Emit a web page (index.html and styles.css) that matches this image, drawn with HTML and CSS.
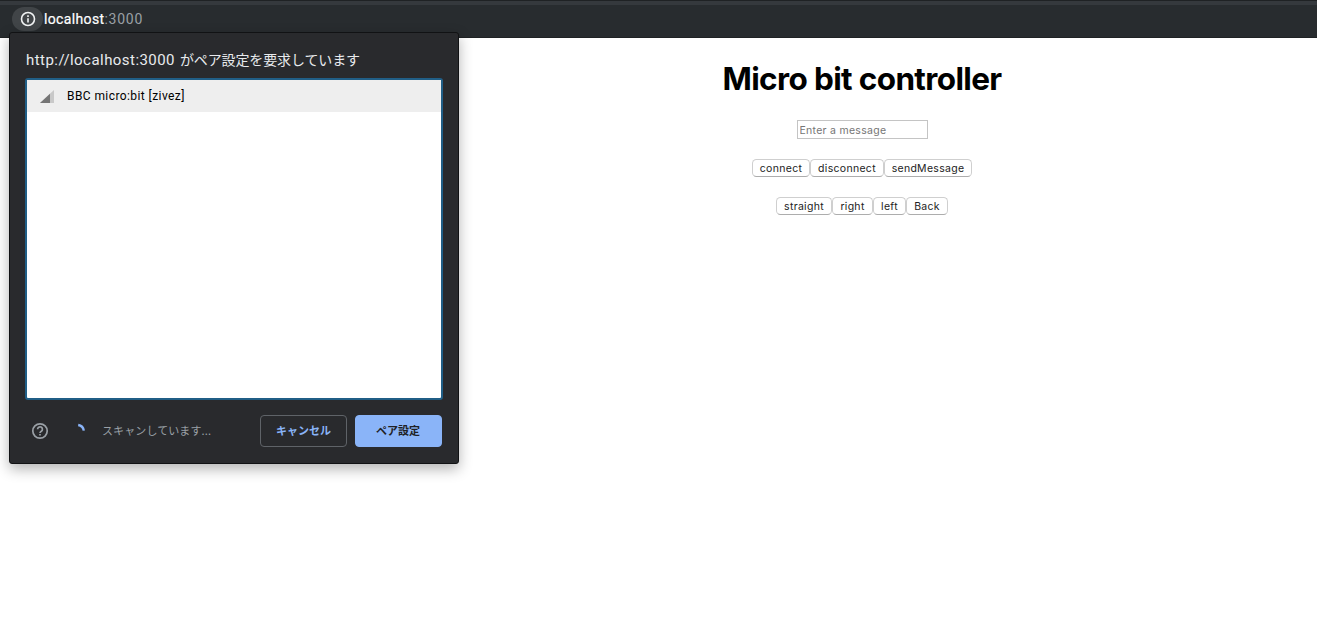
FILE: index.html
```html
<!DOCTYPE html>
<html lang="ja">
<head>
<meta charset="utf-8">
<title>Micro bit controller</title>
<link rel="stylesheet" href="styles.css">
</head>
<body>
<header class="toolbar">
  <span class="site-info">
    <svg width="16" height="16" viewBox="0 0 16 16" fill="none" stroke="#f1f3f4" stroke-width="1.6"><circle cx="8" cy="8" r="6.5"/><path d="M8 7.2v4.2M8 4.3v1.7"/></svg>
  </span>
  <span class="url"><span class="host">localhost</span><span class="port">:3000</span></span>
</header>
<main class="page">
  <h1 class="title">Micro bit controller</h1>
  <input class="message" type="text" placeholder="Enter a message">
  <div class="row">
    <button class="btn connect">connect</button><button class="btn disconnect">disconnect</button><button class="btn send">sendMessage</button>
  </div>
  <div class="row">
    <button class="btn straight">straight</button><button class="btn right">right</button><button class="btn left">left</button><button class="btn back">Back</button>
  </div>
</main>
<section class="dialog">
  <h2 class="heading"><span class="origin">http://localhost:3000</span><span class="request">がペア設定を要求しています</span></h2>
  <div class="devices">
    <div class="device">
      <svg class="signal" width="14" height="14" viewBox="0 0 14 14"><path d="M14 0v13H0z" fill="#c9c9c9"/><path d="M10 3.7V13H0z" fill="#757575"/></svg>
      <span class="device-name">BBC micro:bit [zivez]</span>
    </div>
  </div>
  <footer class="footer">
    <svg class="help" width="18" height="18" viewBox="0 0 18 18" fill="none" stroke="#9aa0a6" stroke-width="1.7"><circle cx="9" cy="9" r="7.2"/><path d="M6.6 7.3a2.4 2.4 0 1 1 3.8 1.9C9.5 9.8 9 10.1 9 11"/><path d="M9 11.9v1.6"/></svg>
    <svg class="spinner" width="16" height="16" viewBox="0 0 16 16" fill="none" stroke="#8ab4f8" stroke-width="2.4"><path d="M8.2 2A6.8 6.8 0 0 1 13.8 7.6"/></svg>
    <span class="status">スキャンしています...</span>
    <button class="action cancel">キャンセル</button>
    <button class="action pair">ペア設定</button>
  </footer>
</section>
</body>
</html>
```
FILE: styles.css
```css
* { box-sizing: border-box; }
body {
  margin: 0;
  height: 619px;
  overflow: hidden;
  background: #fff;
  font-family: Inter, "Noto Sans CJK JP", sans-serif;
}
.toolbar {
  display: flex;
  align-items: center;
  height: 38px;
  padding-left: 12px;
  background: linear-gradient(#1f2224 0 1px, #35393d 1px 5px, #282c2f 5px 37px, #1f2224 37px);
}
.site-info {
  display: flex;
  align-items: center;
  justify-content: center;
  width: 31px;
  height: 24px;
  border-radius: 12px;
  background: #414548;
}
.url {
  margin-left: 1px;
  font: 14px/20px Roboto, sans-serif;
}
.host { color: #fff; -webkit-text-stroke: .2px #fff; letter-spacing: .35px; }
.port { color: #9aa0a6; letter-spacing: .75px; }
.page {
  display: flex;
  flex-direction: column;
  align-items: center;
  padding: 21px 0 0 407px;
}
.title {
  margin: 0;
  font-size: 31.5px;
  line-height: 40px;
  font-weight: 700;
  letter-spacing: -.63px;
  color: #000;
  white-space: nowrap;
}
.message {
  width: 131px;
  height: 19px;
  margin: 21px 0 20px;
  padding: 2px 2px 0;
  border: 1px solid #c4c4c4;
  border-radius: 0;
  font: 10.5px/15px Inter, sans-serif;
  letter-spacing: .28px;
}
.message::placeholder { color: #757575; opacity: 1; }
.row {
  display: flex;
  height: 18px;
  margin-bottom: 20px;
}
.btn {
  height: 18px;
  padding: 1px 0 0;
  border: 1px solid #cfcfcf;
  border-bottom-color: #adadad;
  border-radius: 4.5px;
  background: #fff;
  color: #222;
  font: 10.5px/15px Inter, sans-serif;
  letter-spacing: .3px;
  white-space: nowrap;
}
.connect { width: 58px; }
.disconnect { width: 74px; }
.send { width: 88px; }
.straight { width: 56px; }
.right { width: 41px; }
.left { width: 33px; }
.back { width: 42px; }
.dialog {
  position: absolute;
  left: 9px;
  top: 32px;
  width: 450px;
  height: 432px;
  padding: 17px 16px 0 15px;
  border: 1px solid #111214;
  border-radius: 3px;
  background: #292a2d;
  box-shadow: 0 5px 14px rgba(0, 0, 0, .3);
}
.heading {
  display: flex;
  gap: 5px;
  margin: 0 0 8px 1px;
  font: 15px/20px Roboto, "Noto Sans CJK JP", sans-serif;
  color: #e8eaed;
  white-space: nowrap;
}
.origin { letter-spacing: .45px; }
.request { font-size: 14px; letter-spacing: -.13px; }
.devices {
  width: 418px;
  height: 322px;
  border: 2px solid #205e86;
  border-radius: 3px;
  background: #fff;
}
.device {
  display: flex;
  align-items: center;
  gap: 13px;
  height: 32px;
  padding-left: 13px;
  background: #eee;
}
.signal { margin-top: 2px; }
.device-name {
  font: 12px/16px Roboto, sans-serif;
  letter-spacing: .42px;
  color: #000;
}
.footer {
  display: flex;
  align-items: center;
  height: 32px;
  margin-top: 15px;
  padding-left: 6px;
}
.spinner { margin-left: 21px; }
.status {
  width: 158px;
  margin: -2px 0 0 16px;
  font: 11px/16px "Noto Sans CJK JP", sans-serif;
  letter-spacing: .1px;
  color: #9aa0a6;
  white-space: nowrap;
}
.action {
  width: 87px;
  height: 32px;
  padding: 0 0 2px;
  border: 1px solid #5f6368;
  border-radius: 4px;
  font: 700 11px/16px "Noto Sans CJK JP", sans-serif;
}
.cancel { background: transparent; color: #8ab4f8; }
.pair { margin-left: 8px; padding-right: 1px; border-color: #8ab4f8; background: #8ab4f8; color: #202124; }
```
